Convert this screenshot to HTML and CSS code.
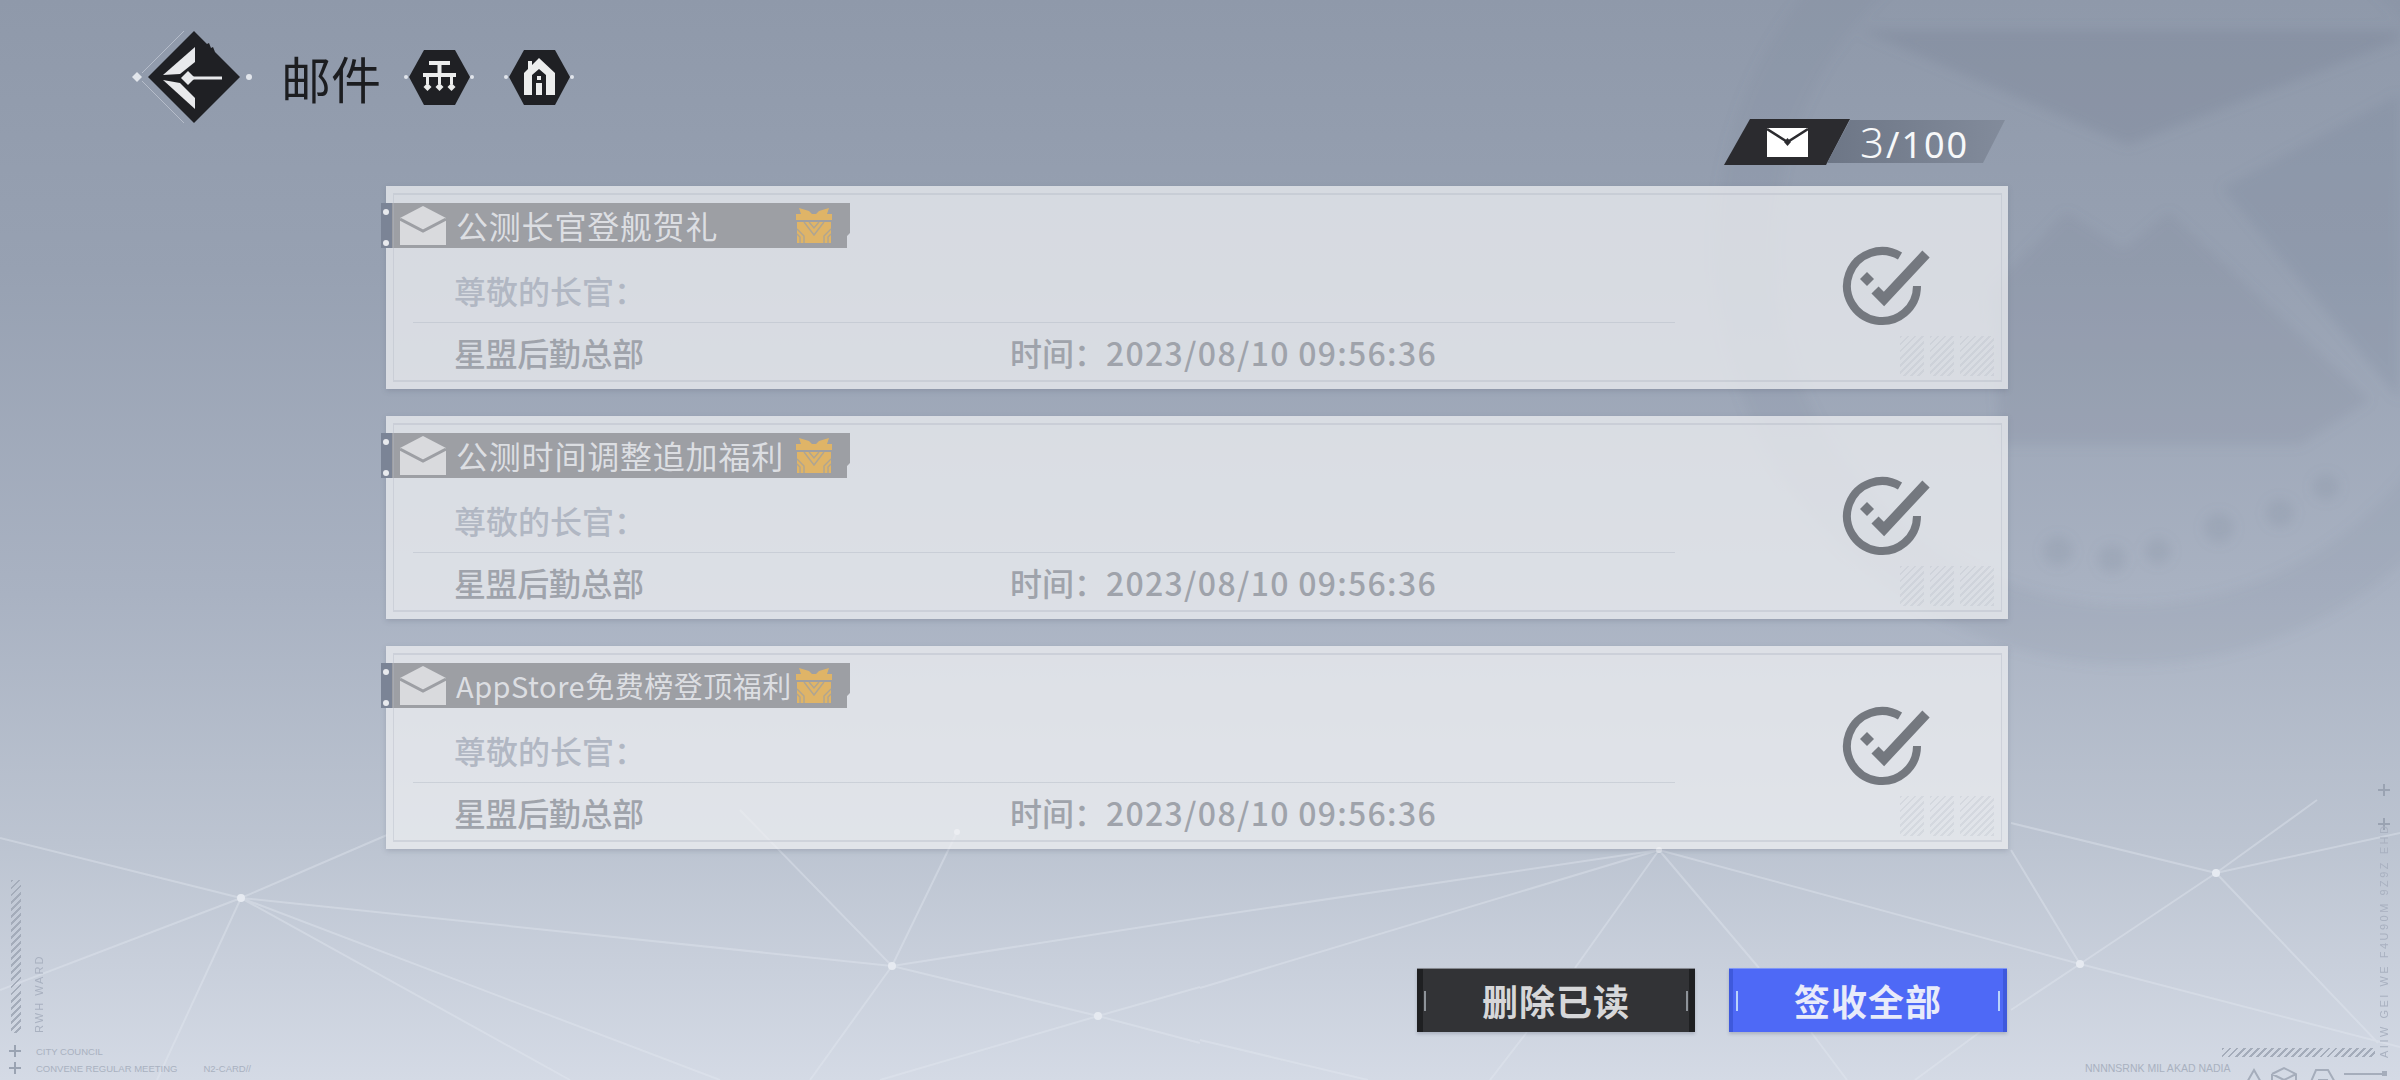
FILE: index.html
```html
<!DOCTYPE html>
<html lang="zh">
<head>
    <meta charset="UTF-8">
    <title>邮件</title>
    <link rel="stylesheet" href="styles.css">
</head>
<body>

<svg class="sprite" width="0" height="0">
    <symbol id="icon-letter" viewBox="0 0 46 39">
        <path d="M23 0 46 12V39H0V12Z" fill="#d9dadd"/>
        <path d="M0 13 23 25 46 13" fill="none" stroke="#9d9fa4" stroke-width="3"/>
    </symbol>
    <symbol id="icon-gift" viewBox="0 0 36 35">
        <path d="M3 0 13 3 16 6H5ZM33 0 23 3 20 6H31Z" fill="#dfb467"/>
        <rect x="0" y="6" width="36" height="6" fill="#dfb467"/>
        <rect x="1" y="14" width="34" height="21" fill="#dfb467"/>
        <path d="M8 14 18 27 28 14M13 14 18 20 23 14M1 21 8 28V35M35 21 28 28V35M1 26 4 29V35M35 26 32 29V35" fill="none" stroke="#aea593" stroke-width="1.400"/>
    </symbol>
    <symbol id="icon-check" viewBox="0 0 100 90">
        <path d="M63 15A35 35 0 1 0 80 45" fill="none" stroke="#74787f" stroke-width="8"/>
        <path d="M38 49 47 58 89 13" fill="none" stroke="#74787f" stroke-width="10"/>
        <path d="M30 31 37 38 30 45 23 38Z" fill="#74787f"/>
    </symbol>
</svg>

<!-- background: faded envelope and the line network -->
<svg class="backdrop" width="2400" height="1080" viewBox="0 0 2400 1080">
    <defs>
        <filter id="soft"><feGaussianBlur stdDeviation="6"/></filter>
    </defs>
    <g filter="url(#soft)">
        <circle cx="2130" cy="250" r="385" fill="none" stroke="#6f7a8e" stroke-opacity=".1" stroke-width="60"/>
        <path d="M1860 30H2400V40L2128 145Z" fill="#6f7a8e" fill-opacity=".26"/>
        <path d="M2222 188 2400 94V400Z" fill="#6f7a8e" fill-opacity=".18"/>
        <path d="M1990 290 2066 212 2124 249 2169 212 2370 400 2300 445H2000Z" fill="#6f7a8e" fill-opacity=".16"/>
        <g fill="#6f7a8e" fill-opacity=".17">
            <circle cx="2058" cy="551" r="15"/>
            <circle cx="2112" cy="559" r="14"/>
            <circle cx="2158" cy="551" r="13"/>
            <circle cx="2219" cy="528" r="15"/>
            <circle cx="2280" cy="513" r="14"/>
            <circle cx="2326" cy="487" r="13"/>
        </g>
    </g>
    <g class="net-lines">
        <path d="M241 898 0 838M241 898 387 835M241 898 0 990M241 898 157 1080M241 898 570 1080M241 898 720 1080M241 898 892 966"/>
        <path d="M892 966 1200 918M892 966 810 1080M892 966 957 832M892 966 1098 1016M892 966 740 810"/>
        <path d="M1098 1016 1200 1043M1098 1016 880 1080M1098 1016 1200 987"/>
        <path d="M1659 850 1200 918M1659 850 1200 988M1659 850 1575 968M1659 850 1759 968M1659 850 2080 964M1200 1040 1368 1080"/>
        <path d="M2080 964 2216 873M2080 964 2400 1047M2080 964 2011 1010M2080 964 2011 850M2216 873 2011 823M2216 873 2400 833M2216 873 2317 800M2216 873 2378 1043"/>
        <path d="M1527 1032 1490 1080M1811 1032 1847 1080M1980 1032 1915 1080"/>
    </g>
    <g fill="#e6eaf1">
        <circle cx="241" cy="898" r="4"/>
        <circle cx="892" cy="966" r="4"/>
        <circle cx="1098" cy="1016" r="4"/>
        <circle cx="957" cy="832" r="3"/>
        <circle cx="1659" cy="850" r="3"/>
        <circle cx="2080" cy="964" r="4"/>
        <circle cx="2216" cy="873" r="4"/>
    </g>
</svg>

<div class="deco deco-left">
    <div class="hatch-v"></div>
    <div class="vert-text">RWH WARD</div>
    <div class="deco-line"><span class="plus"></span>CITY COUNCIL</div>
    <div class="deco-line"><span class="plus"></span>CONVENE REGULAR MEETING<span class="deco-gap">N2-CARD//</span></div>
</div>

<div class="deco deco-right">
    <span class="plus plus-a"></span>
    <span class="plus plus-b"></span>
    <div class="vert-text vert-right">AIIW GEI WE F4U90M 9Z9Z EHD</div>
    <div class="hatch-h"></div>
    <div class="deco-tail">
        <span class="tail-text">NNNNSRNK MIL AKAD NADIA</span>
        <svg width="150" height="24" viewBox="0 0 150 24" fill="none" stroke="#a5adbb" stroke-width="2">
            <path d="M2 24 10 10 18 24"/>
            <path d="M28 14 40 8 52 14V24M28 14 40 20 52 14M28 14V24M40 20V24"/>
            <path d="M66 24 72 10H84L92 24M74 20H84"/>
            <path d="M100 14H138"/>
            <rect x="138" y="11" width="5" height="5" fill="#a5adbb" stroke="none"/>
        </svg>
    </div>
</div>

<div class="page">
    <div class="topbar">
        <svg class="back-icon" width="130" height="130" viewBox="0 0 130 130">
            <path d="M60 19 18 61M18 69 60 111" stroke="#b6bdca" stroke-width="1" fill="none" transform="translate(-6 0)"/>
            <path d="M64 19 77 32 79 31 81 36 83 35 85 40 110 65 64 111 18 65Z" fill="#1f2024"/>
            <path d="M65 35 33 63 50 62 65 50Z" fill="#e8e9ec"/>
            <path d="M33 68 65 97V86L50 71Z" fill="#e8e9ec"/>
            <path d="M58 59 65 66 58 73 51 66Z" fill="#e8e9ec"/>
            <path d="M60 64.500H92V67.500H60Z" fill="#e8e9ec"/>
            <path d="M7 60 12 65 7 70 2 65Z" fill="#e2e6ec"/>
            <circle cx="119" cy="65" r="3" fill="#e2e6ec"/>
        </svg>
        <div class="page-title">邮件</div>
        <svg class="hex-btn" width="76" height="60" viewBox="0 0 76 60">
            <path d="M8 30 23 3H54L69 30 54 58H23Z" fill="#1f2024"/>
            <circle cx="5" cy="30" r="2" fill="#e2e6ec"/>
            <circle cx="71" cy="30" r="2" fill="#e2e6ec"/>
            <g fill="#eceded">
                <rect x="28" y="14" width="21" height="4"/>
                <rect x="36.500" y="18" width="4" height="8"/>
                <rect x="22" y="26" width="33" height="4"/>
                <rect x="25" y="30" width="3" height="7"/>
                <rect x="37" y="30" width="3" height="7"/>
                <rect x="49" y="30" width="3" height="7"/>
                <path d="M26.500 36 30.500 40 26.500 44 22.500 40Z"/>
                <path d="M38.500 36 42.500 40 38.500 44 34.500 40Z"/>
                <path d="M50.500 36 54.500 40 50.500 44 46.500 40Z"/>
            </g>
        </svg>
        <svg class="hex-btn" width="76" height="60" viewBox="0 0 76 60">
            <path d="M8 30 23 3H54L69 30 54 58H23Z" fill="#1f2024"/>
            <circle cx="5" cy="30" r="2" fill="#e2e6ec"/>
            <circle cx="71" cy="30" r="2" fill="#e2e6ec"/>
            <path d="M38 11 54 26V48H45V28L38 22 31 28V48H23V26L27 22V14H31V18Z" fill="#eceded"/>
            <rect x="35" y="36" width="6" height="12" fill="#eceded"/>
            <rect x="36" y="29" width="4" height="4" fill="#eceded"/>
        </svg>
    </div>

    <div class="counter-row">
        <div class="counter-icon">
            <svg width="41" height="29" viewBox="0 0 41 29">
                <rect width="41" height="29" fill="#fff"/>
                <path d="M0 1 20.500 14 41 1" fill="none" stroke="#2b2b2f" stroke-width="2.500"/>
                <path d="M20.500 10 24 14 20.500 18 17 14Z" fill="#2b2b2f"/>
            </svg>
        </div>
        <div class="counter-num"><span class="counter-big">3</span>/100</div>
    </div>

    <div class="mail-list">
        <div class="mail-card">
            <div class="mail-main">
                <div class="mail-banner">
                    <svg class="letter" width="46" height="39"><use href="#icon-letter"/></svg>
                    <span class="mail-title">公测长官登舰贺礼</span>
                    <svg class="gift" width="36" height="35"><use href="#icon-gift"/></svg>
                </div>
                <div class="mail-greet">尊敬的长官：</div>
                <div class="mail-line"></div>
                <div class="mail-meta">
                    <span class="mail-sender">星盟后勤总部</span>
                    <span>时间：<span class="mail-time">2023/08/10 09:56:36</span></span>
                </div>
            </div>
            <div class="mail-side">
                <svg width="100" height="90"><use href="#icon-check"/></svg>
            </div>
            <div class="frame"></div>
            <div class="stamp"><i></i><i></i><i></i></div>
        </div>

        <div class="mail-card">
            <div class="mail-main">
                <div class="mail-banner">
                    <svg class="letter" width="46" height="39"><use href="#icon-letter"/></svg>
                    <span class="mail-title">公测时间调整追加福利</span>
                    <svg class="gift" width="36" height="35"><use href="#icon-gift"/></svg>
                </div>
                <div class="mail-greet">尊敬的长官：</div>
                <div class="mail-line"></div>
                <div class="mail-meta">
                    <span class="mail-sender">星盟后勤总部</span>
                    <span>时间：<span class="mail-time">2023/08/10 09:56:36</span></span>
                </div>
            </div>
            <div class="mail-side">
                <svg width="100" height="90"><use href="#icon-check"/></svg>
            </div>
            <div class="frame"></div>
            <div class="stamp"><i></i><i></i><i></i></div>
        </div>

        <div class="mail-card">
            <div class="mail-main">
                <div class="mail-banner">
                    <svg class="letter" width="46" height="39"><use href="#icon-letter"/></svg>
                    <span class="mail-title mail-title-long">AppStore免费榜登顶福利</span>
                    <svg class="gift" width="36" height="35"><use href="#icon-gift"/></svg>
                </div>
                <div class="mail-greet">尊敬的长官：</div>
                <div class="mail-line"></div>
                <div class="mail-meta">
                    <span class="mail-sender">星盟后勤总部</span>
                    <span>时间：<span class="mail-time">2023/08/10 09:56:36</span></span>
                </div>
            </div>
            <div class="mail-side">
                <svg width="100" height="90"><use href="#icon-check"/></svg>
            </div>
            <div class="frame"></div>
            <div class="stamp"><i></i><i></i><i></i></div>
        </div>
    </div>

    <div class="actions">
        <div class="btn btn-dark">删除已读</div>
        <div class="btn btn-blue">签收全部</div>
    </div>
</div>

</body>
</html>
```

FILE: styles.css
```css
/* mail screen */
body {
    margin: 0;
    width: 2400px;
    height: 1080px;
    overflow: hidden;
    position: relative;
    background: linear-gradient(180deg, #8f99aa 0%, #97a1b2 25%, #a9b2c2 55%, #bcc4d1 78%, #d4dae5 100%);
    font-family: "Noto Sans CJK SC", "Noto Sans", sans-serif;
}
.sprite {
    position: absolute;
}
.backdrop {
    position: absolute;
    left: 0;
    top: 0;
}
.net-lines path {
    fill: none;
    stroke: #e6eaf1;
    stroke-opacity: .38;
    stroke-width: 2;
}
.page {
    position: relative;
    display: flex;
    flex-direction: column;
    height: 100%;
}

/* top bar */
.topbar {
    display: flex;
    align-items: center;
    height: 84px;
    padding: 35px 0 0 130px;
}
.back-icon {
    flex: none;
}
.page-title {
    margin-left: 21px;
    margin-right: 20px;
    font-size: 50px;
    line-height: 84px;
    color: #1c1d20;
}
.hex-btn {
    flex: none;
    margin-right: 24px;
}

/* 3/100 */
.counter-row {
    display: flex;
    justify-content: flex-end;
    height: 46px;
    margin-right: 395px;
}
.counter-icon {
    width: 126px;
    height: 46px;
    background-color: #2b2b2f;
    clip-path: polygon(26px 0, 100% 0, 102px 100%, 0 100%);
    display: flex;
    align-items: center;
    justify-content: center;
}
.counter-num {
    width: 178px;
    height: 43px;
    margin: 1px 0 0 -23px;
    padding-left: 33px;
    box-sizing: border-box;
    background: linear-gradient(90deg, #6d7686, #828b9b);
    clip-path: polygon(23px 0, 100% 0, 156px 100%, 0 100%);
    color: #f7f8f9;
    font-family: "Noto Sans", sans-serif;
    font-weight: 400;
    font-size: 36px;
    line-height: 43px;
    letter-spacing: 2px;
}
.counter-big {
    font-weight: 300;
    font-size: 42px;
}

/* mail cards */
.mail-list {
    display: flex;
    flex-direction: column;
    gap: 27px;
    width: 1622px;
    margin: 21px 0 0 386px;
}
.mail-card {
    position: relative;
    display: flex;
    height: 203px;
    background-color: rgba(238, 239, 241, .74);
    box-shadow: 0 2px 5px rgba(90, 100, 120, .25);
}
.mail-main {
    flex: 1;
    padding-top: 17px;
}
.mail-side {
    width: 242px;
    padding-bottom: 3px;
    box-sizing: border-box;
    display: flex;
    align-items: center;
    justify-content: center;
}
.frame {
    position: absolute;
    left: 7px;
    right: 6px;
    top: 7px;
    bottom: 7px;
    border: 1px solid rgba(180, 186, 198, .4);
    border-top-width: 2px;
    border-bottom-width: 2px;
    pointer-events: none;
}
.stamp {
    position: absolute;
    right: 14px;
    bottom: 13px;
    display: flex;
    gap: 6px;
    height: 40px;
}
.stamp i {
    display: block;
    width: 24px;
    background: repeating-linear-gradient(135deg, rgba(150, 158, 172, .16) 0 2px, transparent 2px 5px);
}
.stamp i:last-child {
    width: 34px;
}
.mail-banner {
    position: relative;
    display: flex;
    align-items: center;
    width: 469px;
    height: 45px;
    margin-left: -5px;
    box-sizing: border-box;
    padding: 0 18px 0 19px;
    background: linear-gradient(90deg, #7b8496 0, #7b8496 11px, #9d9fa4 11px);
    clip-path: polygon(0 0, 100% 0, 100% 30px, 466px 33px, 466px 100%, 0 100%);
    color: #dcdee2;
}
.mail-banner::before,
.mail-banner::after {
    content: "";
    position: absolute;
    left: 2px;
    width: 6px;
    height: 6px;
    border-radius: 50%;
    background-color: #e8eaee;
}
.mail-banner::before {
    top: 6px;
}
.mail-banner::after {
    top: 37px;
}
.letter {
    flex: none;
    margin-right: 10px;
}
.mail-title {
    font-size: 32px;
    line-height: 45px;
    letter-spacing: .8px;
    white-space: nowrap;
}
.mail-title-long {
    font-size: 29px;
    letter-spacing: .5px;
}
.gift {
    flex: none;
    margin-left: auto;
}
.mail-greet {
    margin: 20px 0 0 68px;
    height: 44px;
    font-size: 32px;
    font-weight: 500;
    line-height: 44px;
    color: #b1b7c3;
}
.mail-line {
    width: 1262px;
    height: 1px;
    margin: 10px 0 0 27px;
    background-color: rgba(180, 186, 198, .45);
}
.mail-meta {
    display: flex;
    margin: 7px 0 0 68px;
    font-size: 32px;
    font-weight: 500;
    line-height: 44px;
    color: #9fa3ab;
}
.mail-sender {
    width: 556px;
    letter-spacing: -.4px;
}
.mail-time {
    letter-spacing: 1.280px;
}

/* bottom buttons */
.actions {
    display: flex;
    justify-content: flex-end;
    gap: 34px;
    margin: 119px 393px 0 0;
}
.btn {
    position: relative;
    width: 278px;
    height: 64px;
    box-sizing: border-box;
    text-align: center;
    font-size: 36px;
    font-weight: 700;
    line-height: 62px;
    letter-spacing: 1px;
    box-shadow: 0 2px 3px rgba(90, 100, 120, .3);
}
.btn::before,
.btn::after {
    content: "";
    position: absolute;
    top: 22px;
    width: 2px;
    height: 20px;
}
.btn::before {
    left: 7px;
}
.btn::after {
    right: 7px;
}
.btn-dark {
    background: linear-gradient(90deg, #1f2022 0 6px, #323336 6px, #323336 272px, #1f2022 272px);
    border-top: 1px solid #85888f;
    color: #d6d7d9;
}
.btn-dark::before,
.btn-dark::after {
    background-color: #8e9399;
}
.btn-blue {
    background: linear-gradient(90deg, #3e59dc 0 4px, #4e69f6 4px, #4e69f6 274px, #3e59dc 274px);
    border-top: 1px solid #7e96f8;
    color: #e8ebfa;
}
.btn-blue::before,
.btn-blue::after {
    background-color: #b9d3fb;
}

/* small print in the corners */
.deco {
    position: absolute;
    color: #a9b1c0;
    font-family: "Liberation Sans", sans-serif;
    font-size: 9.500px;
    line-height: 17px;
}
.deco-left {
    left: 11px;
    top: 880px;
    width: 270px;
    height: 200px;
}
.hatch-v {
    width: 10px;
    height: 153px;
    margin-bottom: 10px;
    background: repeating-linear-gradient(135deg, #a4acba 0 2px, transparent 2px 5px);
}
.vert-text {
    position: absolute;
    left: 22px;
    top: 85px;
    height: 68px;
    font-size: 11px;
    writing-mode: vertical-rl;
    transform: rotate(180deg);
    letter-spacing: 2px;
    line-height: 12px;
    white-space: nowrap;
}
.deco-line {
    position: relative;
    padding-left: 25px;
    white-space: nowrap;
}
.plus {
    position: absolute;
    left: -2px;
    top: 2px;
    width: 12px;
    height: 12px;
    background:
        linear-gradient(#9aa3b2, #9aa3b2) center / 100% 2px no-repeat,
        linear-gradient(#9aa3b2, #9aa3b2) center / 2px 100% no-repeat;
}
.deco-gap {
    margin-left: 26px;
}
.deco-right {
    left: 2080px;
    top: 780px;
    width: 320px;
    height: 300px;
}
.plus-a {
    left: 298px;
    top: 4px;
}
.plus-b {
    left: 298px;
    top: 38px;
}
.vert-right {
    left: 298px;
    top: 55px;
    height: 223px;
    letter-spacing: 2.500px;
}
.hatch-h {
    position: absolute;
    left: 142px;
    top: 268px;
    width: 153px;
    height: 9px;
    background: repeating-linear-gradient(135deg, #a4acba 0 2px, transparent 2px 5px);
}
.deco-tail {
    position: absolute;
    left: 5px;
    top: 280px;
    display: flex;
    gap: 12px;
    white-space: nowrap;
    font-size: 10.500px;
}
.tail-text {
    width: 147px;
    overflow: hidden;
}
```
